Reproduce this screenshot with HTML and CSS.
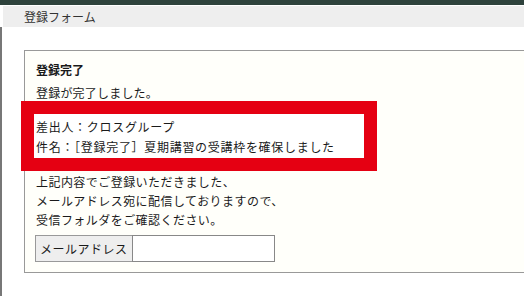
FILE: index.html
```html
<!DOCTYPE html>
<html lang="ja">
<head>
    <meta charset="UTF-8">
    <meta name="viewport" content="width=device-width, initial-scale=1.0">
    <title>登録フォーム</title>
    <link rel="stylesheet" href="styles.css">
</head>
<body>
    <div class="topbar"></div>
    <div class="head">登録フォーム</div>
    <div class="main">
        <div class="panel">
            <h2 class="title">登録完了</h2>
            <p class="done">登録が完了しました。</p>
            <div class="notice">
                <p>差出人：クロスグループ</p>
                <p>件名：［登録完了］夏期講習の受講枠を確保しました</p>
            </div>
            <p class="info">上記内容でご登録いただきました、<br>メールアドレス宛に配信しておりますので、<br>受信フォルダをご確認ください。</p>
            <div class="mail">
                <span class="mail-label">メールアドレス</span>
                <span class="mail-input"></span>
            </div>
        </div>
    </div>
</body>
</html>
```

FILE: styles.css
```css
*{
    margin: 0;
    padding: 0;
    box-sizing: border-box;
}
body{
    width: 524px;
    height: 296px;
    overflow: hidden;
    background-color: #fff;
    font-family: "Noto Sans CJK JP", "Noto Sans", sans-serif;
    font-size: 12px;
    color: #1a1a1a;
}
.topbar{
    height: 5px;
    background-color: #2e423c;
}
.head{
    margin: 1px 0 0 3px;
    height: 21px;
    line-height: 21px;
    padding-left: 21px;
    background-color: #eee;
    color: #333;
}
.main{
    height: 269px;
    border-left: 2px solid #777;
    padding: 23px 0 0 22px;
}
.panel{
    margin-right: -10px;
    background-color: #fffffa;
    border: 1px solid #999;
    padding: 9px 0 10px 11px;
}
.title{
    font-size: 12px;
    font-weight: bold;
    line-height: 20px;
}
.done{
    line-height: 20px;
    margin-top: 3px;
    letter-spacing: 0.2px;
}
.notice{
    position: relative;
    width: 356px;
    margin: -2px 0 0 -15px;
    border: 13px solid #e50012;
    background-color: #fff;
    padding: 3px 0 1px 2px;
    letter-spacing: 0.7px;
}
.notice p{
    line-height: 20px;
}
.info{
    margin-top: 1px;
    line-height: 19px;
    letter-spacing: 0.45px;
}
.mail{
    display: flex;
    margin: 6px 0 0 -1px;
    height: 27px;
}
.mail-label{
    width: 97px;
    background-color: #eee;
    border: 1px solid #999;
    border-right: none;
    padding-left: 4px;
    line-height: 25px;
    letter-spacing: 0.5px;
}
.mail-input{
    width: 143px;
    background-color: #fff;
    border: 1px solid #888;
}
```
